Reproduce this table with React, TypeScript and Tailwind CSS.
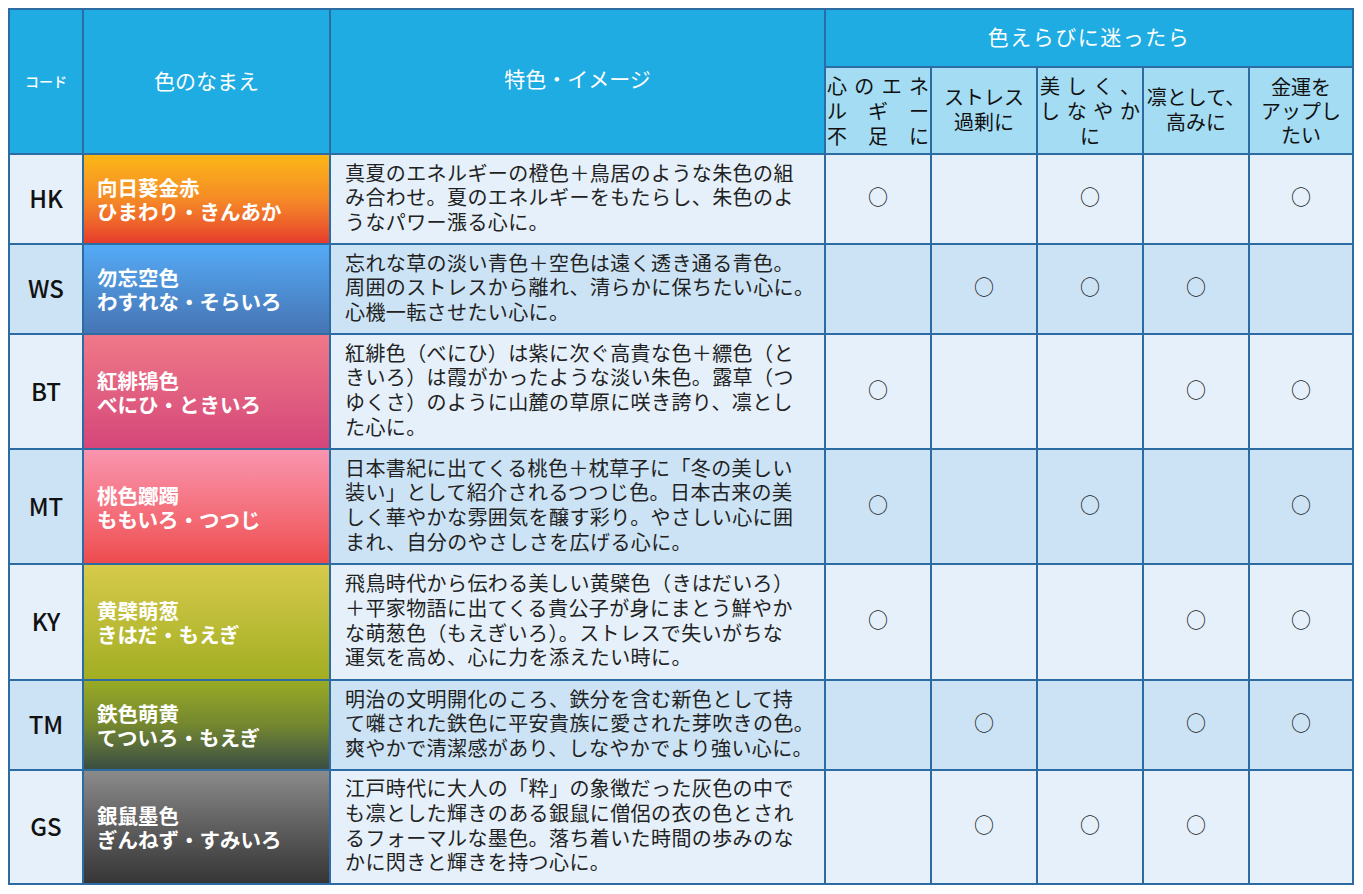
import React from "react";

type Row = {
  code: string;
  name: string;
  kana: string;
  grad: string;
  desc: string[];
  marks: boolean[];
  dark: boolean;
};

const rows: Row[] = [
  {
    code: "HK",
    name: "向日葵金赤",
    kana: "ひまわり・きんあか",
    grad: "bg-gradient-to-b from-[#fbb713] via-[#f58a26] to-[#e63a2c]",
    desc: [
      "真夏のエネルギーの橙色＋鳥居のような朱色の組",
      "み合わせ。夏のエネルギーをもたらし、朱色のよ",
      "うなパワー漲る心に。",
    ],
    marks: [true, false, true, false, true],
    dark: false,
  },
  {
    code: "WS",
    name: "勿忘空色",
    kana: "わすれな・そらいろ",
    grad: "bg-gradient-to-b from-[#54aaf6] to-[#4675b4]",
    desc: [
      "忘れな草の淡い青色＋空色は遠く透き通る青色。",
      "周囲のストレスから離れ、清らかに保ちたい心に。",
      "心機一転させたい心に。",
    ],
    marks: [false, true, true, true, false],
    dark: true,
  },
  {
    code: "BT",
    name: "紅緋鴇色",
    kana: "べにひ・ときいろ",
    grad: "bg-gradient-to-b from-[#ef7888] to-[#d44679]",
    desc: [
      "紅緋色（べにひ）は紫に次ぐ高貴な色＋縹色（と",
      "きいろ）は霞がかったような淡い朱色。露草（つ",
      "ゆくさ）のように山麓の草原に咲き誇り、凛とし",
      "た心に。",
    ],
    marks: [true, false, false, true, true],
    dark: false,
  },
  {
    code: "MT",
    name: "桃色躑躅",
    kana: "ももいろ・つつじ",
    grad: "bg-gradient-to-b from-[#f994af] to-[#ee4b4e]",
    desc: [
      "日本書紀に出てくる桃色＋枕草子に「冬の美しい",
      "装い」として紹介されるつつじ色。日本古来の美",
      "しく華やかな雰囲気を醸す彩り。やさしい心に囲",
      "まれ、自分のやさしさを広げる心に。",
    ],
    marks: [true, false, true, false, true],
    dark: true,
  },
  {
    code: "KY",
    name: "黄檗萌葱",
    kana: "きはだ・もえぎ",
    grad: "bg-gradient-to-b from-[#d7ca4b] to-[#a2ae20]",
    desc: [
      "飛鳥時代から伝わる美しい黄檗色（きはだいろ）",
      "＋平家物語に出てくる貴公子が身にまとう鮮やか",
      "な萌葱色（もえぎいろ）。ストレスで失いがちな",
      "運気を高め、心に力を添えたい時に。",
    ],
    marks: [true, false, false, true, true],
    dark: false,
  },
  {
    code: "TM",
    name: "鉄色萌黄",
    kana: "てついろ・もえぎ",
    grad: "bg-gradient-to-b from-[#99ab24] via-[#74872e] to-[#3b4e40]",
    desc: [
      "明治の文明開化のころ、鉄分を含む新色として持",
      "て囃された鉄色に平安貴族に愛された芽吹きの色。",
      "爽やかで清潔感があり、しなやかでより強い心に。",
    ],
    marks: [false, true, false, true, true],
    dark: true,
  },
  {
    code: "GS",
    name: "銀鼠墨色",
    kana: "ぎんねず・すみいろ",
    grad: "bg-gradient-to-b from-[#8b8b8b] to-[#363636]",
    desc: [
      "江戸時代に大人の「粋」の象徴だった灰色の中で",
      "も凛とした輝きのある銀鼠に僧侶の衣の色とされ",
      "るフォーマルな墨色。落ち着いた時間の歩みのな",
      "かに閃きと輝きを持つ心に。",
    ],
    marks: [false, true, true, true, false],
    dark: false,
  },
];

function Spread({ text }: { text: string }) {
  return (
    <div className="flex justify-between">
      {Array.from(text).map((c, i) => (
        <span key={i}>{c}</span>
      ))}
    </div>
  );
}

export default function App() {
  const font = {
    fontFamily: '"Noto Sans CJK JP", "Noto Sans", sans-serif',
  } as React.CSSProperties;
  return (
    <div className="bg-white w-[1363px] h-[894px] pt-2 pl-2" style={font}>
      <div className="w-[1346px] grid grid-cols-[72px_245px_493px_104px_104px_104px_104px_102px] grid-rows-[56px_85px_88px_88px_113px_113px_114px_88px_112px] gap-[2px] p-[2px] bg-[#2c6ca2]">
        {/* header */}
        <div className="row-span-2 bg-[#1eace3] flex items-center justify-center text-white text-[14px] font-medium">
          コード
        </div>
        <div className="row-span-2 bg-[#1eace3] flex items-center justify-center text-white text-[21px] pb-[2px]">
          色のなまえ
        </div>
        <div className="row-span-2 bg-[#1eace3] flex items-center justify-center text-white text-[21px] pb-[6px]">
          特色・イメージ
        </div>
        <div className="col-span-5 bg-[#1eace3] flex items-center justify-center text-white text-[21px] tracking-[1.5px] pb-[2px]">
          色えらびに迷ったら
        </div>
        <div className="bg-[#a4dcf3] text-[#111] text-[20px] leading-[25px] px-[1px] flex flex-col justify-center">
          <Spread text="心のエネ" />
          <Spread text="ルギー" />
          <Spread text="不足に" />
        </div>
        <div className="bg-[#a4dcf3] text-[#111] text-[20px] leading-[25px] flex flex-col justify-center items-center pb-[4px]">
          <div>ストレス</div>
          <div>過剰に</div>
        </div>
        <div className="bg-[#a4dcf3] text-[#111] text-[20px] leading-[25px] px-[2px] flex flex-col justify-center">
          <Spread text="美しく、" />
          <Spread text="しなやか" />
          <div className="text-center">に</div>
        </div>
        <div className="bg-[#a4dcf3] text-[#111] text-[20px] leading-[25px] flex flex-col justify-center items-center pb-[4px]">
          <div className="whitespace-nowrap">凛として、</div>
          <div>高みに</div>
        </div>
        <div className="bg-[#a4dcf3] text-[#111] text-[20px] leading-[24px] flex flex-col justify-center items-center">
          <div>金運を</div>
          <div>アップし</div>
          <div>たい</div>
        </div>

        {rows.map((r) => {
          const bg = r.dark ? "bg-[#cce2f5]" : "bg-[#e5f0fa]";
          return (
            <React.Fragment key={r.code}>
              <div
                className={`${bg} flex items-center justify-center text-[24px] text-[#111] font-medium pb-[2px]`}
              >
                {r.code}
              </div>
              <div
                className={`${r.grad} flex flex-col justify-center pl-[13px] text-white font-bold text-[20.5px] leading-[24px]`}
              >
                <div className="whitespace-nowrap">{r.name}</div>
                <div className="whitespace-nowrap">{r.kana}</div>
              </div>
              <div
                className={`${bg} flex flex-col justify-center pl-[14px] pb-[3px] text-[#222] text-[20px] tracking-[0.4px] leading-[24.6px]`}
              >
                {r.desc.map((l, i) => (
                  <div key={i} className="whitespace-nowrap">
                    {l}
                  </div>
                ))}
              </div>
              {r.marks.map((m, i) => (
                <div
                  key={i}
                  className={`${bg} flex items-center justify-center text-[20px] text-[#222] pb-[4px]`}
                >
                  {m ? "○" : ""}
                </div>
              ))}
            </React.Fragment>
          );
        })}
      </div>
    </div>
  );
}
